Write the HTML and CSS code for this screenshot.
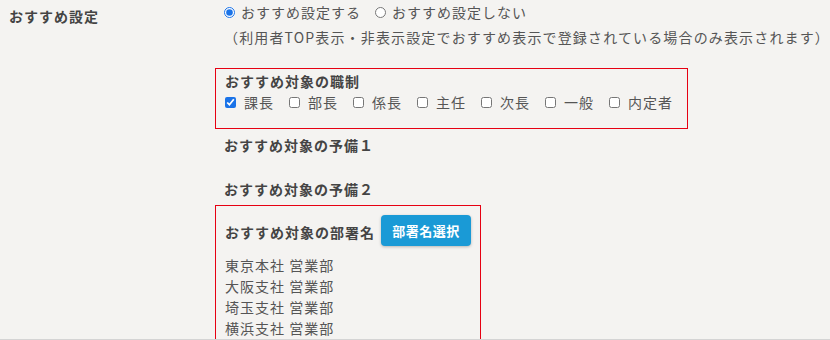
FILE: index.html
```html
<!DOCTYPE html>
<html lang="ja">
<head>
    <meta charset="UTF-8">
    <meta name="viewport" content="width=device-width, initial-scale=1.0">
    <title>おすすめ設定</title>
    <link rel="stylesheet" href="styles.css">
</head>
<body>
    <div class="setting-row">
        <div class="setting-label">おすすめ設定</div>

        <div class="setting-body">
            <div class="radio-group">
                <label class="radio-label">
                    <input type="radio" name="recommend" checked> おすすめ設定する
                </label>
                <label class="radio-label">
                    <input type="radio" name="recommend"> おすすめ設定しない
                </label>
            </div>
            <p class="note">（利用者TOP表示・非表示設定でおすすめ表示で登録されている場合のみ表示されます）</p>

            <div class="section boxed box-position">
                <div class="section-title">おすすめ対象の職制</div>
                <div class="options">
                    <label class="checkbox-label"><input type="checkbox" checked> 課長</label>
                    <label class="checkbox-label"><input type="checkbox"> 部長</label>
                    <label class="checkbox-label"><input type="checkbox"> 係長</label>
                    <label class="checkbox-label"><input type="checkbox"> 主任</label>
                    <label class="checkbox-label"><input type="checkbox"> 次長</label>
                    <label class="checkbox-label"><input type="checkbox"> 一般</label>
                    <label class="checkbox-label"><input type="checkbox"> 内定者</label>
                </div>
            </div>

            <div class="section spare-1">
                <div class="section-title">おすすめ対象の予備１</div>
            </div>

            <div class="section spare-2">
                <div class="section-title">おすすめ対象の予備２</div>
            </div>

            <div class="section boxed box-dept">
                <div class="title-row">
                    <div class="section-title">おすすめ対象の部署名</div>
                    <button class="select-btn">部署名選択</button>
                </div>
                <ul class="dept-list">
                    <li>東京本社 営業部</li>
                    <li>大阪支社 営業部</li>
                    <li>埼玉支社 営業部</li>
                    <li>横浜支社 営業部</li>
                </ul>
            </div>
        </div>
    </div>
</body>
</html>
```

FILE: styles.css
```css
body {
    font-family: "Noto Sans CJK JP", "Noto Sans", sans-serif;
    font-size: 14px;
    letter-spacing: 1px;
    line-height: 21px;
    color: #555;
    background-color: #f4f3f1;
    margin: 0;
}

.setting-row {
    display: flex;
    border-bottom: 1px solid #d4d4d4;
    height: 339px;
    overflow: hidden;
}

.setting-label {
    width: 207px;
    padding: 6px 0 0 9px;
    font-weight: bold;
    color: #444;
}

.setting-body {
    flex: 1;
    padding-top: 2px;
}

.radio-group {
    display: flex;
    gap: 14px;
    padding-left: 9px;
}

.radio-label,
.checkbox-label {
    display: flex;
    align-items: center;
    gap: 6px;
    white-space: nowrap;
}

input[type="radio"],
input[type="checkbox"] {
    width: 11px;
    height: 11px;
    margin: 0;
    flex-shrink: 0;
    accent-color: #1a73e8;
}

.note {
    margin: 4px 0 0 0;
    padding-left: 9px;
    letter-spacing: 1.15px;
    white-space: nowrap;
}

.section {
    padding: 0 9px;
}

.section-title {
    font-weight: bold;
    color: #444;
    white-space: nowrap;
}

.boxed {
    border: 1px solid #e60012;
    padding: 2px 8px 0 9px;
}

.box-position {
    width: 454px;
    margin-top: 20px;
    padding-bottom: 15px;
}

.options {
    display: flex;
    gap: 15px;
}

.checkbox-label {
    gap: 8px;
}

.spare-1 {
    margin-top: 6px;
}

.spare-2 {
    margin-top: 23px;
}

.box-dept {
    width: 247px;
    margin-top: 5px;
    padding-top: 9px;
}

.title-row {
    display: flex;
    align-items: flex-end;
    gap: 6px;
}

.title-row .section-title {
    margin-bottom: 3px;
}

.select-btn {
    width: 90px;
    height: 31px;
    padding: 0;
    background: #1a9ad6;
    color: white;
    border: none;
    border-radius: 4px;
    font-family: inherit;
    font-size: 13px;
    font-weight: bold;
    letter-spacing: 0.5px;
    box-shadow: 0 1px 3px rgba(0,0,0,0.25);
    cursor: pointer;
}

.dept-list {
    list-style: none;
    margin: 9px 0 0 0;
    padding: 0;
    line-height: 20.9px;
}
```
